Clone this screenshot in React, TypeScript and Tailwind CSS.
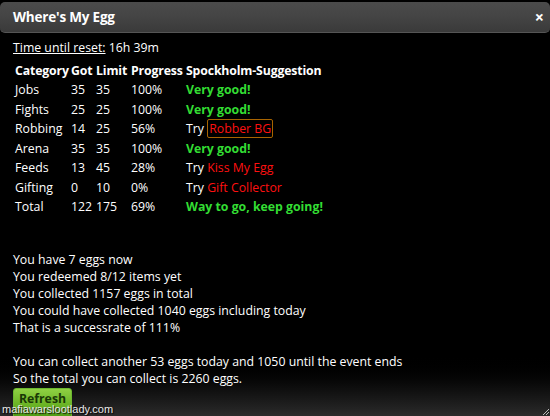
import React from "react";

const rows = [
  { c: "Jobs", g: "35", l: "35", p: "100%", s: { kind: "good", t: "Very good!" } },
  { c: "Fights", g: "25", l: "25", p: "100%", s: { kind: "good", t: "Very good!" } },
  { c: "Robbing", g: "14", l: "25", p: "56%", s: { kind: "try", t: "Robber BG", box: true } },
  { c: "Arena", g: "35", l: "35", p: "100%", s: { kind: "good", t: "Very good!" } },
  { c: "Feeds", g: "13", l: "45", p: "28%", s: { kind: "try", t: "Kiss My Egg" } },
  { c: "Gifting", g: "0", l: "10", p: "0%", s: { kind: "try", t: "Gift Collector" } },
  { c: "Total", g: "122", l: "175", p: "69%", s: { kind: "good", t: "Way to go, keep going!" } },
];

export default function App() {
  return (
    <div
      className="relative w-[550px] h-[416px] overflow-hidden bg-black text-white"
      style={{ fontFamily: '"Open Sans", "Noto Sans", sans-serif' }}
    >
      {/* Bottom gradient (background) */}
      <div className="absolute left-0 right-0 bottom-0 h-[64px] bg-gradient-to-b from-black to-[#2b2b2b] pointer-events-none" />

      <div className="relative">
        {/* Title bar */}
        <div className="pt-[2px]">
          <div className="h-[31px] rounded-[5px] bg-gradient-to-b from-[#4b4b4b] via-[#444444] to-[#3a3a3a] flex items-center justify-between pl-[13px] pr-[6px] border-b border-[#555]">
            <span className="text-[13.5px] font-bold tracking-[-0.2px]">Where's My Egg</span>
            <span className="text-[16px] font-bold leading-none">×</span>
          </div>
        </div>

        {/* Content */}
        <div className="px-[13px] pt-[6px] text-[12.3px] leading-[17px]">
          <div className="mb-[4px]">
            <span className="underline">Time until reset:</span> 16h 39m
          </div>
          <table className="ml-[1px] border-collapse table-fixed">
            <thead>
              <tr className="h-[20px] text-[12.3px] font-bold tracking-[-0.15px]">
                <th className="text-left font-bold pl-[1px] w-[57px]">Category</th>
                <th className="text-left font-bold w-[25px]">Got</th>
                <th className="text-left font-bold w-[35px]">Limit</th>
                <th className="text-left font-bold w-[55px]">Progress</th>
                <th className="text-left font-bold">Spockholm-Suggestion</th>
              </tr>
            </thead>
            <tbody>
              {rows.map((r) => (
                <tr key={r.c} className="h-[19.5px]">
                  <td className="pl-[1px]">{r.c}</td>
                  <td>{r.g}</td>
                  <td>{r.l}</td>
                  <td>{r.p}</td>
                  <td className="whitespace-nowrap">
                    {r.s.kind === "good" ? (
                      <span className="font-bold text-[#33dd33]">{r.s.t}</span>
                    ) : (
                      <span>
                        Try{" "}
                        <span
                          className={
                            r.s.box
                              ? "text-[#ff1010] border border-[#a86400] rounded-[2px] px-[1px] py-[0px]"
                              : "text-[#ff1010]"
                          }
                        >
                          {r.s.t}
                        </span>
                      </span>
                    )}
                  </td>
                </tr>
              ))}
            </tbody>
          </table>

          <div className="mt-[34px]">
            <div>You have 7 eggs now</div>
            <div>You redeemed 8/12 items yet</div>
            <div>You collected 1157 eggs in total</div>
            <div>You could have collected 1040 eggs including today</div>
            <div>That is a successrate of 111%</div>
            <div className="h-[17px]" />
            <div>You can collect another 53 eggs today and 1050 until the event ends</div>
            <div>So the total you can collect is 2260 eggs.</div>
          </div>
        </div>
      </div>

      {/* Refresh button */}
      <div className="absolute left-[13px] top-[388px] w-[59px] h-[32px] rounded-[3px] border border-[#6cb830] bg-gradient-to-b from-[#8fd043] via-[#6cb526] to-[#4a9812] flex justify-center">
        <span className="text-[12.3px] font-bold text-[#1a3806] mt-[1px]">Refresh</span>
      </div>

      {/* Watermark */}
      <div
        className="absolute left-[2px] top-[404px] text-[11px] text-[#e8e8e8] leading-none"
        style={{ fontFamily: '"Liberation Sans", Arial, sans-serif', textShadow: "1px 1px 1px #000" }}
      >
        mafiawarslootlady.com
      </div>

      {/* Resize grip */}
      <svg className="absolute right-0 bottom-0" width="10" height="10" viewBox="0 0 10 10">
        <path d="M9 3 L3 9 M9 6 L6 9" stroke="#bbb" strokeWidth="1" />
      </svg>
    </div>
  );
}
